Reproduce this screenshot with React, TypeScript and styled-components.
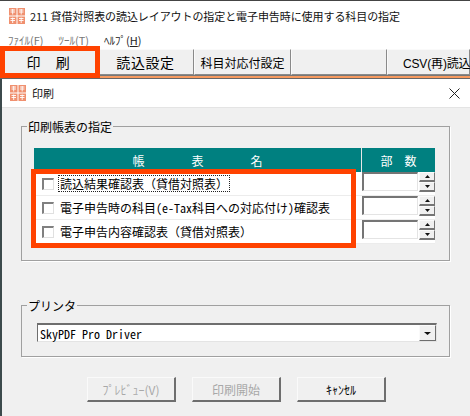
import React from "react";
import styled, { createGlobalStyle } from "styled-components";

const Global = createGlobalStyle`
  html, body { margin: 0; padding: 0; background: #fff; }
  body { font-family: "Noto Sans CJK JP", "Liberation Sans", sans-serif; }
`;

const Page = styled.div`
  position: relative;
  width: 470px;
  height: 416px;
  overflow: hidden;
  background: #fff;
  display: flex;
  flex-direction: column;
`;
const TopEdge = styled.div`
  height: 1px;
  background: #444;
  flex: none;
`;
const TitleBar = styled.div`
  height: 30px;
  flex: none;
  display: flex;
  align-items: center;
  padding-left: 9px;
  gap: 5px;
  font-size: 11px;
  letter-spacing: -0.08px;
  color: #111;
`;
const MenuBar = styled.div`
  height: 18px;
  flex: none;
  display: flex;
  align-items: center;
  padding-left: 8px;
  gap: 15px;
  font-size: 11px;
`;
const MenuItem = styled.span<{ $dim?: boolean }>`
  color: ${(p) => (p.$dim ? "#777" : "#222")};
  & u { text-underline-offset: 1px; }
`;
const Toolbar = styled.div`
  height: 26px;
  flex: none;
  display: flex;
  background: #f0f0f0;
  border-bottom: 1px solid #777;
  box-sizing: content-box;
`;
const ToolButton = styled.div<{ $w: number; $size?: number; $track?: number }>`
  width: ${(p) => p.$w}px;
  flex: none;
  box-sizing: border-box;
  display: flex;
  align-items: center;
  justify-content: center;
  font-size: ${(p) => p.$size ?? 12}px;
  letter-spacing: ${(p) => p.$track ?? 0}px;
  color: #000;
  background: #f0f0f0;
  border: 1px solid;
  border-color: #fafafa #8a8a8a #8a8a8a #fafafa;
  white-space: nowrap;
`;
const ToolCsv = styled(ToolButton)`
  justify-content: flex-start;
  padding-left: 15px;
  letter-spacing: -0.15px;
  font-family: "Liberation Sans", "Noto Sans CJK JP", sans-serif;
`;
const Accent = styled.div`
  height: 2px;
  flex: none;
  background: #f79a5f;
`;
const DarkLine = styled.div`
  height: 1px;
  flex: none;
  background: #666;
`;
const Shell = styled.div`
  flex: 1;
  display: flex;
  background: #3c4a4c;
  min-height: 0;
`;
const Dialog = styled.div`
  flex: 1;
  display: flex;
  flex-direction: column;
  margin-left: 2px;
  background: #f0f0f0;
`;
const DialogTitle = styled.div`
  height: 29px;
  flex: none;
  background: #fff;
  display: flex;
  align-items: center;
  padding: 0 10px 0 8px;
  gap: 6px;
  font-size: 11px;
  color: #111;
  border-bottom: 1px solid #e4e4e4;
  box-sizing: border-box;
`;
const Grow = styled.div`
  flex: 1;
`;
const DialogBody = styled.div`
  flex: 1;
  display: flex;
  flex-direction: column;
  padding: 12px 20px 0 19px;
`;
const Group = styled.fieldset<{ $h: number }>`
  margin: 0;
  height: ${(p) => p.$h}px;
  box-sizing: border-box;
  border: 1px solid #a0a0a0;
  box-shadow: 1px 1px 0 #fff;
  padding: 0;
  min-width: 0;
`;
const Legend = styled.legend`
  font-size: 12px;
  padding: 0 1px;
  margin-left: 5px;
  line-height: 13px;
  color: #000;
`;
const Grid = styled.div`
  margin: 15px 14px 0 12px;
  display: grid;
  grid-template-columns: 327px 74px;
  grid-auto-rows: 24px;
  background: #fff;
`;
const Head = styled.div<{ $gap: number; $divider?: boolean }>`
  background: #008080;
  color: #fff;
  font-size: 12px;
  display: flex;
  align-items: center;
  justify-content: center;
  gap: ${(p) => p.$gap}px;
  box-sizing: border-box;
  ${(p) => (p.$divider ? "border-left: 1px solid #e8e8e8;" : "")}
`;
const NameCell = styled.div`
  display: flex;
  align-items: center;
  padding-left: 8px;
  gap: 5px;
  font-size: 12px;
  color: #000;
  border-bottom: 1px solid #ececec;
  box-sizing: border-box;
  white-space: nowrap;
`;
const Check = styled.span`
  width: 12px;
  height: 12px;
  flex: none;
  box-sizing: border-box;
  background: #fff;
  border: 1px solid;
  border-width: 2px 1px 1px 2px;
  border-color: #808080 #e0e0e0 #e0e0e0 #808080;
`;
const Label = styled.span<{ $focus?: boolean }>`
  padding: 0 1px;
  line-height: 15px;
  outline: ${(p) => (p.$focus ? "1px dotted #222" : "none")};
`;
const Half = styled.span`
  font-feature-settings: "hwid";
`;
const CountCell = styled.div`
  display: flex;
  align-items: flex-start;
  gap: 1px;
  background: #fff;
  border-bottom: 1px solid #ececec;
  box-sizing: border-box;
`;
const CountInput = styled.div`
  width: 56px;
  height: 19px;
  margin-left: 1px;
  box-sizing: border-box;
  background: #fff;
  border: 1px solid;
  border-width: 2px 1px 1px 2px;
  border-color: #757575 #e4e4e4 #e4e4e4 #757575;
`;
const Spin = styled.div`
  display: flex;
  flex-direction: column;
`;
const SpinButton = styled.div`
  width: 16px;
  height: 10px;
  box-sizing: border-box;
  background: #f0f0f0;
  border: 1px solid;
  border-width: 1px 1px 2px 1px;
  border-color: #fafafa #757575 #757575 #fafafa;
  display: flex;
  align-items: center;
  justify-content: center;
`;
const Spacer = styled.div`
  height: 38px;
  flex: none;
`;
const Combo = styled.div`
  margin: 11px 12px 0 15px;
  height: 19px;
  box-sizing: border-box;
  background: #fff;
  border: 1px solid;
  border-color: #6e6e6e #e4e4e4 #e4e4e4 #6e6e6e;
  border-top-width: 2px;
  display: flex;
  align-items: center;
  justify-content: space-between;
  font-size: 12px;
  padding-left: 2px;
  font-feature-settings: "hwid";
  color: #000;
`;
const ComboArrow = styled.div`
  width: 17px;
  height: 16px;
  box-sizing: border-box;
  background: #f0f0f0;
  border: 1px solid;
  border-color: #fafafa #6e6e6e #6e6e6e #fafafa;
  display: flex;
  align-items: center;
  justify-content: center;
`;
const Actions = styled.div`
  display: flex;
  gap: 16px;
  padding: 20px 0 0 66px;
`;
const ActionButton = styled.div<{ $off?: boolean }>`
  width: 89px;
  height: 25px;
  box-sizing: border-box;
  background: #f0f0f0;
  border: 1px solid;
  border-width: 1px 2px 2px 1px;
  border-color: #fafafa #6e6e6e #6e6e6e #fafafa;
  display: flex;
  align-items: center;
  justify-content: center;
  font-size: 12px;
  color: ${(p) => (p.$off ? "#a8a8a8" : "#000")};
`;
const Highlight = styled.div<{ $x: number; $y: number; $w: number; $h: number }>`
  position: absolute;
  left: ${(p) => p.$x}px;
  top: ${(p) => p.$y}px;
  width: ${(p) => p.$w}px;
  height: ${(p) => p.$h}px;
  box-sizing: border-box;
  border: 5px solid #ff4200;
  pointer-events: none;
`;

const AppIcon = () => (
  <svg width="16" height="16" viewBox="0 0 16 16" style={{ flex: "none" }}>
    <rect x="0" y="0" width="16" height="16" fill="#fff" />
    {[[0, 0], [8.5, 0], [0, 8.5], [8.5, 8.5]].map(([x, y]) => (
      <g key={`${x}-${y}`}>
        <rect x={x} y={y} width="7.5" height="7.5" fill="#f0906f" />
        <path d={`M${x + 1.5} ${y + 2}h4.5M${x + 1.5} ${y + 4}h4.5M${x + 3.7} ${y + 1}v5.5`} stroke="#fff" strokeWidth="0.9" fill="none" />
      </g>
    ))}
  </svg>
);
const CloseIcon = () => (
  <svg width="11" height="11" viewBox="0 0 11 11">
    <path d="M.5.5l10 10M10.5.5l-10 10" stroke="#222" strokeWidth="1" fill="none" />
  </svg>
);
const Tri = ({ down, w = 5 }: { down?: boolean; w?: number }) => (
  <svg width={w} height={3} viewBox={`0 0 ${w} 3`}>
    <path d={down ? `M0 0H${w}L${w / 2} 3Z` : `M0 3H${w}L${w / 2} 0Z`} fill="#111" />
  </svg>
);

const rows: React.ReactNode[] = [
  "読込結果確認表（貸借対照表）",
  <>
    電子申告時の科目<Half>(e-Tax</Half>科目への対応付け<Half>)</Half>確認表
  </>,
  "電子申告内容確認表（貸借対照表）",
];

export default function App() {
  return (
    <Page>
      <Global />
      <TopEdge />
      <TitleBar>
        <AppIcon />
        <span>211 貸借対照表の読込レイアウトの指定と電子申告時に使用する科目の指定</span>
      </TitleBar>
      <MenuBar>
        <MenuItem $dim>ﾌｧｲﾙ(F)</MenuItem>
        <MenuItem $dim>ﾂｰﾙ(T)</MenuItem>
        <MenuItem>ﾍﾙﾌﾟ(<u>H</u>)</MenuItem>
      </MenuBar>
      <Toolbar>
        <ToolButton $w={97} $size={14} $track={0.6}>印　刷</ToolButton>
        <ToolButton $w={97} $size={14} $track={0.6}>読込設定</ToolButton>
        <ToolButton $w={97}>科目対応付設定</ToolButton>
        <ToolButton $w={96} />
        <ToolCsv $w={83}>CSV(再)読込</ToolCsv>
      </Toolbar>
      <Accent />
      <DarkLine />
      <Shell>
        <Dialog>
          <DialogTitle>
            <AppIcon />
            <span>印刷</span>
            <Grow />
            <CloseIcon />
          </DialogTitle>
          <DialogBody>
            <Group $h={141}>
              <Legend>印刷帳表の指定</Legend>
              <Grid>
                <Head $gap={47}>
                  <span>帳</span>
                  <span>表</span>
                  <span>名</span>
                </Head>
                <Head $gap={12} $divider>
                  <span>部</span>
                  <span>数</span>
                </Head>
                {rows.map((r, i) => (
                  <React.Fragment key={i}>
                    <NameCell>
                      <Check />
                      <Label $focus={i === 0}>{r}</Label>
                    </NameCell>
                    <CountCell>
                      <CountInput />
                      <Spin>
                        <SpinButton><Tri /></SpinButton>
                        <SpinButton><Tri down /></SpinButton>
                      </Spin>
                    </CountCell>
                  </React.Fragment>
                ))}
              </Grid>
            </Group>
            <Spacer />
            <Group $h={58}>
              <Legend>プリンタ</Legend>
              <Combo>
                <span>SkyPDF Pro Driver</span>
                <ComboArrow><Tri down w={7} /></ComboArrow>
              </Combo>
            </Group>
            <Actions>
              <ActionButton $off>ﾌﾟﾚﾋﾞｭｰ(V)</ActionButton>
              <ActionButton $off>印刷開始</ActionButton>
              <ActionButton>ｷｬﾝｾﾙ</ActionButton>
            </Actions>
          </DialogBody>
        </Dialog>
      </Shell>
      <Highlight $x={0} $y={46} $w={100} $h={32} />
      <Highlight $x={31} $y={169} $w={325} $h={79} />
    </Page>
  );
}
